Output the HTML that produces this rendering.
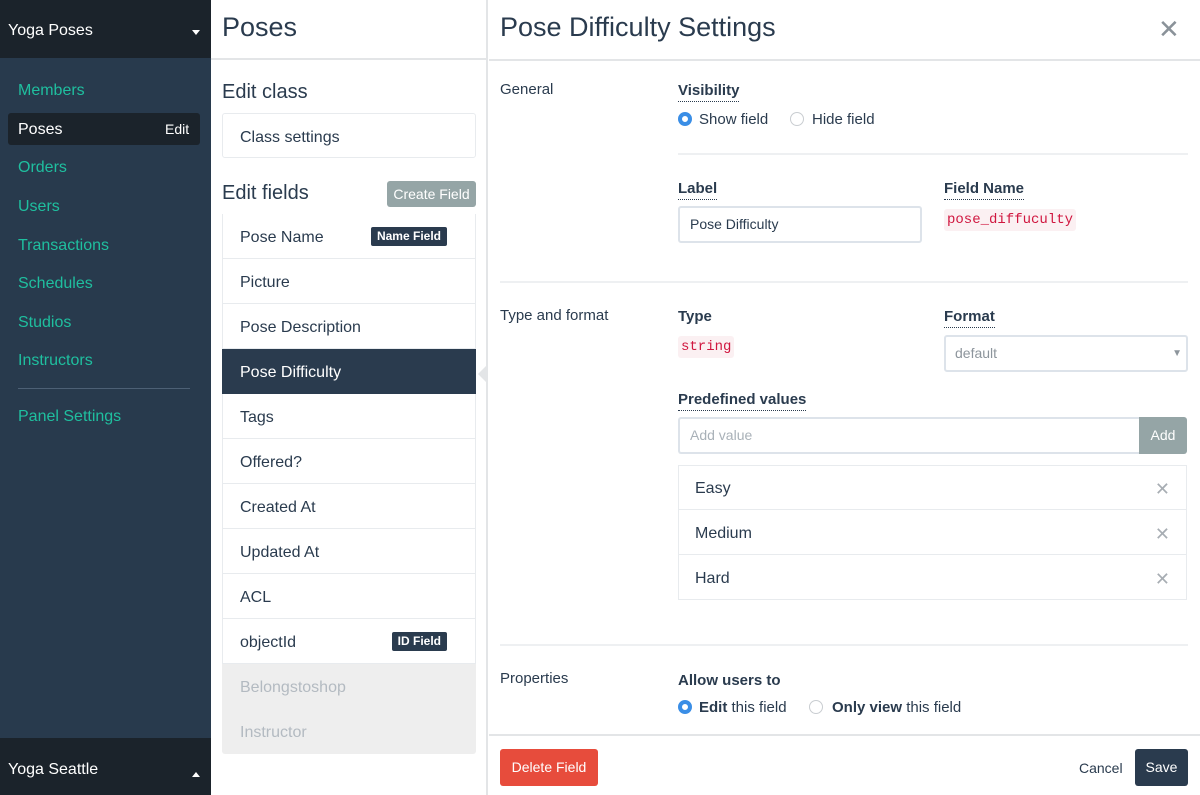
<!DOCTYPE html>
<html><head><meta charset="utf-8"><style>
*{margin:0;padding:0;box-sizing:border-box}
body{width:1200px;height:795px;overflow:hidden;font-family:"Liberation Sans",sans-serif;color:#2a3b4e;background:#fff;position:relative}
.a{position:absolute}
.sb{left:0;top:0;width:211px;height:795px;background:#283a4d}
.nav{left:18px;font-size:16px;color:#1fbf9f;line-height:20px}
.mid{left:211px;top:0;width:277px;height:795px;background:#fff;border-right:2px solid #e3e5e7}
.row{left:222px;width:254px;height:45px;border:1px solid #e8ebee;border-top:none;font-size:16px;line-height:44px;padding-left:17px;padding-top:2px;background:#fff}
.badge{position:absolute;right:28px;top:13px;height:19px;line-height:19px;font-size:12px;font-weight:bold;color:#fff;background:#2a3b4e;border-radius:2px;padding:0 6px}
.lbl{font-size:15px;line-height:20px}
.h{font-size:15px;font-weight:bold;line-height:20px;border-bottom:1px dotted #2a3b4e}
.code{font-family:"Liberation Mono",monospace;font-size:14px;color:#d0163f;background:#fbf0f2;border-radius:3px;padding:2px 3px;line-height:18px}
.rad{width:14px;height:14px;border-radius:50%;border:1px solid #c9cdd1;background:#fff}
.rad.on{border:4px solid #3a8ee6;background:#fff}
.hr{height:2px;background:#eef0f2}
.vrow{left:678px;width:509px;height:45px;border:1px solid #e8ebee;border-top:none;font-size:16px;line-height:44px;padding-left:16px;padding-top:2px}
.x{position:absolute;right:16px;top:2px;color:#a7adb3;font-size:18px}
</style></head><body>
<div class="a sb"></div>
<div class="a" style="left:0;top:0;width:211px;height:58px;background:#1b232b"></div>
<div class="a" style="left:8px;top:21px;font-size:16px;color:#fff;line-height:20px">Yoga Poses</div>
<div class="a" style="left:192px;top:30px;width:0;height:0;border:4px solid transparent;border-top:5px solid #fff"></div>
<div class="a nav" style="top:81px">Members</div>
<div class="a" style="left:8px;top:113px;width:192px;height:32px;background:#1b232b;border-radius:3px"></div>
<div class="a nav" style="top:120px;color:#fff">Poses</div>
<div class="a" style="left:165px;top:119px;font-size:14px;color:#fff;line-height:20px">Edit</div>
<div class="a nav" style="top:158px">Orders</div>
<div class="a nav" style="top:197px">Users</div>
<div class="a nav" style="top:236px">Transactions</div>
<div class="a nav" style="top:274px">Schedules</div>
<div class="a nav" style="top:313px">Studios</div>
<div class="a nav" style="top:351px">Instructors</div>
<div class="a" style="left:18px;top:388px;width:172px;height:1px;background:#4d6075"></div>
<div class="a nav" style="top:407px">Panel Settings</div>
<div class="a" style="left:0;top:738px;width:211px;height:57px;background:#1b232b"></div>
<div class="a" style="left:8px;top:760px;font-size:16px;color:#fff;line-height:20px">Yoga Seattle</div>
<div class="a" style="left:192px;top:768px;width:0;height:0;border:4px solid transparent;border-bottom:5px solid #fff"></div>

<div class="a mid"></div>
<div class="a" style="left:211px;top:58px;width:277px;height:2px;background:#e3e5e7"></div>
<div class="a" style="left:222px;top:11px;font-size:27px;line-height:32px">Poses</div>
<div class="a" style="left:222px;top:80px;font-size:20px;line-height:24px">Edit class</div>
<div class="a" style="left:222px;top:113px;width:254px;height:45px;border:1px solid #e8ebee;border-radius:3px;font-size:16px;line-height:43px;padding-left:17px;padding-top:2px">Class settings</div>
<div class="a" style="left:222px;top:181px;font-size:20px;line-height:24px">Edit fields</div>
<div class="a" style="left:387px;top:181px;width:89px;height:26px;background:#95a5a6;color:#fff;border-radius:3px;font-size:14px;line-height:27px;text-align:center">Create Field</div>
<div class="a" style="left:222px;top:214px;width:254px;height:1px;background:#e8ebee"></div>
<div class="a row" style="top:214px">Pose Name<span class="badge">Name Field</span></div>
<div class="a row" style="top:259px">Picture</div>
<div class="a row" style="top:304px">Pose Description</div>
<div class="a row" style="top:349px;background:#2a3b4e;color:#fff;border-color:#2a3b4e">Pose Difficulty</div>
<div class="a row" style="top:394px">Tags</div>
<div class="a row" style="top:439px">Offered?</div>
<div class="a row" style="top:484px">Created At</div>
<div class="a row" style="top:529px">Updated At</div>
<div class="a row" style="top:574px">ACL</div>
<div class="a row" style="top:619px">objectId<span class="badge">ID Field</span></div>
<div class="a row" style="top:664px;background:#eeeeee;color:#b3bac1;border-color:#eeeeee">Belongstoshop</div>
<div class="a row" style="top:709px;background:#eeeeee;color:#b3bac1;border-color:#eeeeee;border-radius:0 0 3px 3px">Instructor</div>
<div class="a" style="left:478px;top:364px;width:0;height:0;border:10px solid transparent;border-right:10px solid #e3e5e7;border-left:none"></div>

<div class="a" style="left:489px;top:59px;width:711px;height:2px;background:#e3e5e7"></div>
<div class="a" style="left:500px;top:10px;font-size:27px;line-height:34px">Pose Difficulty Settings</div>
<div class="a" style="left:1158px;top:14px;font-size:26px;color:#8a9299;line-height:30px">✕</div>

<div class="a lbl" style="left:500px;top:80px">General</div>
<div class="a h" style="left:678px;top:81px">Visibility</div>
<div class="a rad on" style="left:678px;top:112px"></div>
<div class="a lbl" style="left:699px;top:110px">Show field</div>
<div class="a rad" style="left:790px;top:112px"></div>
<div class="a lbl" style="left:812px;top:110px">Hide field</div>
<div class="a hr" style="left:678px;top:153px;width:510px"></div>
<div class="a h" style="left:678px;top:179px">Label</div>
<div class="a" style="left:678px;top:206px;width:244px;height:37px;border:2px solid #dde3ea;border-radius:3px;font-size:14px;line-height:33px;padding-left:10px">Pose Difficulty</div>
<div class="a h" style="left:944px;top:179px">Field Name</div>
<div class="a code" style="left:944px;top:209px">pose_diffuculty</div>
<div class="a hr" style="left:500px;top:281px;width:688px"></div>

<div class="a lbl" style="left:500px;top:306px">Type and format</div>
<div class="a lbl" style="left:678px;top:307px;font-weight:bold">Type</div>
<div class="a code" style="left:678px;top:336px">string</div>
<div class="a h" style="left:944px;top:307px">Format</div>
<div class="a" style="left:944px;top:335px;width:244px;height:37px;border:2px solid #dde3ea;border-radius:3px;font-size:14px;line-height:33px;padding-left:9px;color:#8d959c">default<span style="position:absolute;right:4px;top:0;font-size:10px">▼</span></div>
<div class="a h" style="left:678px;top:390px">Predefined values</div>
<div class="a" style="left:678px;top:417px;width:462px;height:37px;border:2px solid #dde3ea;border-right:none;border-radius:3px 0 0 3px;font-size:14px;line-height:33px;padding-left:10px;color:#a9b1b8">Add value</div>
<div class="a" style="left:1139px;top:417px;width:48px;height:37px;background:#95a5a6;color:#fff;border-radius:0 3px 3px 0;font-size:14px;line-height:37px;text-align:center">Add</div>
<div class="a" style="left:678px;top:465px;width:509px;height:1px;background:#e8ebee"></div>
<div class="a vrow" style="top:465px">Easy<span class="x">✕</span></div>
<div class="a vrow" style="top:510px">Medium<span class="x">✕</span></div>
<div class="a vrow" style="top:555px">Hard<span class="x">✕</span></div>
<div class="a hr" style="left:500px;top:644px;width:688px"></div>

<div class="a lbl" style="left:500px;top:669px">Properties</div>
<div class="a lbl" style="left:678px;top:671px;font-weight:bold">Allow users to</div>
<div class="a rad on" style="left:678px;top:700px"></div>
<div class="a lbl" style="left:699px;top:698px"><b>Edit</b> this field</div>
<div class="a rad" style="left:809px;top:700px"></div>
<div class="a lbl" style="left:832px;top:698px"><b>Only view</b> this field</div>

<div class="a" style="left:489px;top:734px;width:711px;height:2px;background:#e3e5e7"></div>
<div class="a" style="left:500px;top:749px;width:98px;height:37px;background:#e74c3c;color:#fff;border-radius:3px;font-size:14px;line-height:37px;text-align:center">Delete Field</div>
<div class="a" style="left:1079px;top:759px;font-size:14px;line-height:18px">Cancel</div>
<div class="a" style="left:1135px;top:749px;width:53px;height:37px;background:#2a3b4e;color:#fff;border-radius:3px;font-size:14px;line-height:37px;text-align:center">Save</div>
</body></html>
